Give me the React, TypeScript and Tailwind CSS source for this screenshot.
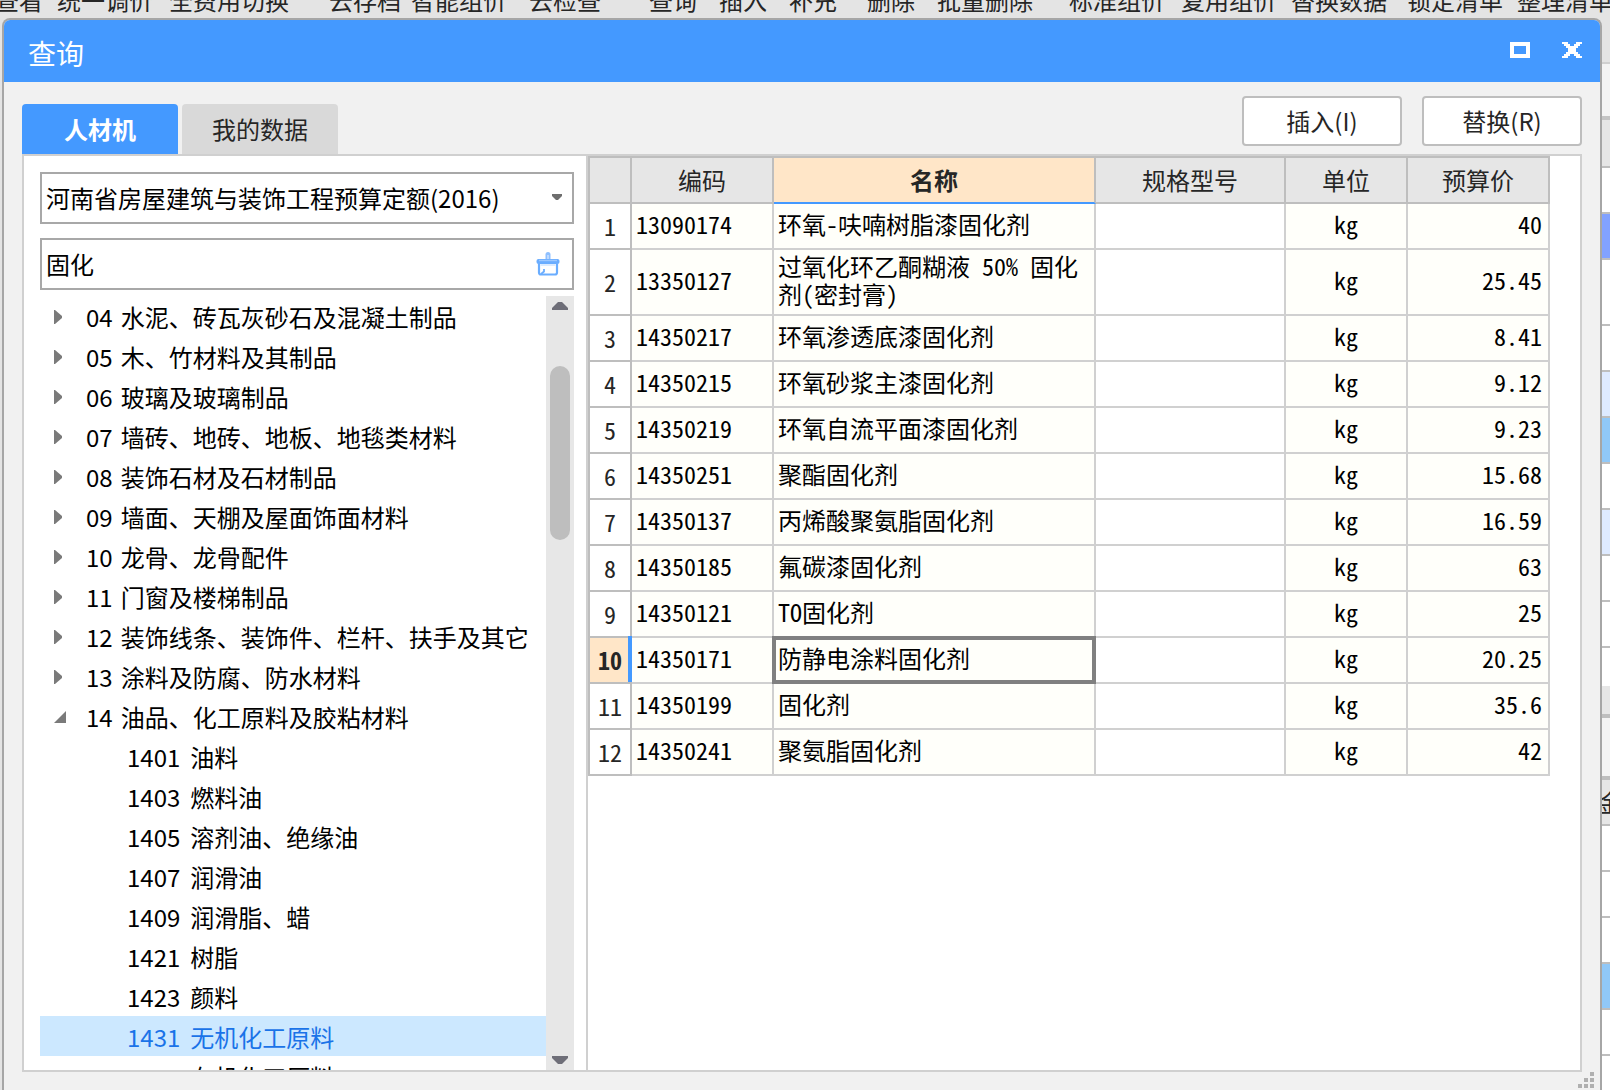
import { useState } from 'react'
import clsx from 'clsx'

// ============================================================================
// DATA
// ============================================================================

const toolbarItems = [
  { label: '查看', gap: '-ml-[5px]' },
  { label: '统一调价', gap: 'ml-3.5' },
  { label: '全费用切换', gap: 'ml-4' },
  { label: '云存档', gap: 'ml-10' },
  { label: '智能组价', gap: 'ml-2.5' },
  { label: '云检查', gap: 'ml-[22px]' },
  { label: '查询', gap: 'ml-12' },
  { label: '插入', gap: 'ml-[22px]' },
  { label: '补充', gap: 'ml-[22px]' },
  { label: '删除', gap: 'ml-[30px]' },
  { label: '批量删除', gap: 'ml-[22px]' },
  { label: '标准组价', gap: 'ml-9' },
  { label: '复用组价', gap: 'ml-4' },
  { label: '替换数据', gap: 'ml-3.5' },
  { label: '锁定清单', gap: 'ml-5' },
  { label: '整理清单', gap: 'ml-3.5' },
]

const categories = [
  { code: '04', name: '水泥、砖瓦灰砂石及混凝土制品' },
  { code: '05', name: '木、竹材料及其制品' },
  { code: '06', name: '玻璃及玻璃制品' },
  { code: '07', name: '墙砖、地砖、地板、地毯类材料' },
  { code: '08', name: '装饰石材及石材制品' },
  { code: '09', name: '墙面、天棚及屋面饰面材料' },
  { code: '10', name: '龙骨、龙骨配件' },
  { code: '11', name: '门窗及楼梯制品' },
  { code: '12', name: '装饰线条、装饰件、栏杆、扶手及其它' },
  { code: '13', name: '涂料及防腐、防水材料' },
  {
    code: '14',
    name: '油品、化工原料及胶粘材料',
    children: [
      { code: '1401', name: '油料' },
      { code: '1403', name: '燃料油' },
      { code: '1405', name: '溶剂油、绝缘油' },
      { code: '1407', name: '润滑油' },
      { code: '1409', name: '润滑脂、蜡' },
      { code: '1421', name: '树脂' },
      { code: '1423', name: '颜料' },
      { code: '1431', name: '无机化工原料' },
      { code: '1433', name: '有机化工原料' },
    ],
  },
]

const materials = [
  { code: '13090174', name: '环氧-呋喃树脂漆固化剂', price: '40' },
  { code: '13350127', name: '过氧化环乙酮糊液 50% 固化剂(密封膏)', price: '25.45' },
  { code: '14350217', name: '环氧渗透底漆固化剂', price: '8.41' },
  { code: '14350215', name: '环氧砂浆主漆固化剂', price: '9.12' },
  { code: '14350219', name: '环氧自流平面漆固化剂', price: '9.23' },
  { code: '14350251', name: '聚酯固化剂', price: '15.68' },
  { code: '14350137', name: '丙烯酸聚氨脂固化剂', price: '16.59' },
  { code: '14350185', name: '氟碳漆固化剂', price: '63' },
  { code: '14350121', name: 'TO固化剂', price: '25' },
  { code: '14350171', name: '防静电涂料固化剂', price: '20.25' },
  { code: '14350199', name: '固化剂', price: '35.6' },
  { code: '14350241', name: '聚氨脂固化剂', price: '42' },
]

// Rows of the main window that stay visible beside the dialog
const backgroundRows = [
  'h-[46px] bg-[#e4e4e4] border-b-2 border-[#d0d0d0]',
  'h-14 bg-[#f4f4f4] border-b-4 border-[#c4c4c4]',
  'h-12 bg-[#e6e6e6] border-b-2 border-[#bebebe]',
  'h-[46px] bg-white border-b-2 border-[#bebebe]',
  'h-[46px] bg-[#82a2ff] border-b-2 border-[#bebebe]',
  'h-[66px] bg-white border-b-2 border-[#bebebe]',
  'h-[46px] bg-white border-b-2 border-[#bebebe]',
  'h-[46px] bg-[#deeaff] border-b-2 border-[#bebebe]',
  'h-[46px] bg-[#90c8f8] border-b-2 border-[#bebebe]',
  'h-[46px] bg-white border-b-2 border-[#bebebe]',
  'h-[46px] bg-[#deeaff] border-b-2 border-[#bebebe]',
  'h-[46px] bg-white border-b-2 border-[#bebebe]',
  'h-[46px] bg-white border-b-2 border-[#bebebe]',
  'h-[38px] bg-white',
  'h-8 bg-[#e6e6e6] border-b-4 border-[#bebebe]',
  'h-[62px] bg-[#f4f4f4] border-b-4 border-[#bebebe]',
]

const backgroundRowsBelow = [
  'h-[46px] bg-white border-b-2 border-[#bebebe]',
  'h-[46px] bg-white border-b-2 border-[#bebebe]',
  'h-[46px] bg-white border-b-2 border-[#bebebe]',
  'h-[46px] bg-[#90c8f8] border-b-2 border-[#bebebe]',
  'h-[46px] bg-white border-b-2 border-[#bebebe]',
]

// ============================================================================
// ICONS
// ============================================================================

function MaximizeIcon() {
  return (
    <svg width="20" height="16" viewBox="0 0 20 16" fill="none" shapeRendering="crispEdges">
      <rect x="2" y="2" width="16" height="12" stroke="#fff" strokeWidth="4" />
    </svg>
  )
}

function CloseIcon() {
  return (
    <svg width="20" height="16" viewBox="0 0 20 16" fill="#fff" shapeRendering="crispEdges">
      <path d="M0 0h6v2h2v2h4V2h2V0h6v2h-2v2h-2v2h-2v4h2v2h2v2h2v2h-6v-2h-2v-2H8v2H6v2H0v-2h2v-2h2v-2h2V6H4V4H2V2H0z" />
    </svg>
  )
}

function BrushIcon() {
  return (
    <svg width="24" height="24" viewBox="0 0 24 24" fill="none">
      <path d="M9.5 8V2.5a2.5 2.5 0 0 1 5 0V8z" fill="#8fc0ff" />
      <path d="M12 3v4" stroke="#d2e6ff" strokeWidth="1.4" />
      <rect x="0.5" y="7" width="23" height="5" rx="2" fill="#6aadff" />
      <path d="M3 8.5h18" stroke="#9cc8ff" strokeWidth="1.4" />
      <path d="M3 12v8.500a2 2 0 0 0 2 2h14a2 2 0 0 0 2-2V12" stroke="#6aadff" strokeWidth="2.200" />
      <path d="M4.500 13h15" stroke="#d2e6ff" strokeWidth="1.600" />
      <path d="M8 17v2.500L5 22" stroke="#6aadff" strokeWidth="1.800" />
    </svg>
  )
}

function CollapsedIcon() {
  return (
    <svg className="block" width="8" height="14" viewBox="0 0 8 14" fill="#7a7a7a">
      <path d="M0 0h1l7 6v2l-7 6H0z" />
    </svg>
  )
}

function ExpandedIcon() {
  return (
    <svg className="block" width="12" height="12" viewBox="0 0 12 12" fill="#7a7a7a">
      <path d="M12 0v12H0z" />
    </svg>
  )
}

function ResizeGrip() {
  return (
    <svg width="16" height="16" viewBox="0 0 16 16" fill="#b0b0b0">
      <path d="M12 0h4v4h-4zM6 6h4v4H6zM12 6h4v4h-4zM0 12h4v4H0zM6 12h4v4H6zM12 12h4v4h-4z" />
    </svg>
  )
}

// ============================================================================
// TREE
// ============================================================================

interface TreeRowProps {
  code: string
  name: string
  level: number
  expanded?: boolean
  selected?: boolean
  onClick: () => void
}

function TreeRow({ code, name, level, expanded, selected, onClick }: TreeRowProps) {
  return (
    <button
      type="button"
      onClick={onClick}
      className={clsx(
        'flex h-10 w-full items-center pt-0.5 text-left whitespace-nowrap',
        level === 0 ? 'pl-3.5' : 'pl-[87px]',
        selected ? 'bg-[#cce8ff] text-[#1a73e8]' : 'text-black'
      )}
    >
      {level === 0 && (
        <span className="w-8">{expanded ? <ExpandedIcon /> : <CollapsedIcon />}</span>
      )}
      <span className={level === 0 ? 'mr-2' : 'mr-2.5'}>{code}</span>
      <span>{name}</span>
    </button>
  )
}

function CategoryTree() {
  const [selected, setSelected] = useState('1431')

  return (
    <div className="mt-1.5 flex min-h-0 flex-1">
      <ul className="min-w-0 flex-1 overflow-hidden">
        {categories.map((item) => (
          <li key={item.code}>
            <TreeRow
              code={item.code}
              name={item.name}
              level={0}
              expanded={!!item.children}
              selected={selected === item.code}
              onClick={() => setSelected(item.code)}
            />
            {item.children && (
              <ul>
                {item.children.map((child) => (
                  <li key={child.code}>
                    <TreeRow
                      code={child.code}
                      name={child.name}
                      level={1}
                      selected={selected === child.code}
                      onClick={() => setSelected(child.code)}
                    />
                  </li>
                ))}
              </ul>
            )}
          </li>
        ))}
      </ul>

      {/* Scrollbar */}
      <div className="flex w-7 flex-col items-center bg-[#e7e7e7] py-1.5">
        <svg width="16" height="8" viewBox="0 0 16 8" fill="#6e6e78">
          <path d="M6 0h4l6 6v2H0V6z" />
        </svg>
        <div className="mt-14 h-[174px] w-5 rounded-full bg-[#bebebe]" />
        <svg className="mt-auto" width="16" height="8" viewBox="0 0 16 8" fill="#6e6e78">
          <path d="M0 0h16v2l-6 6H6L0 2z" />
        </svg>
      </div>
    </div>
  )
}

// ============================================================================
// TABLE
// ============================================================================

const head = 'h-[46px] border-r-2 border-b-2 border-[#bebebe] bg-[#e6e6e6] font-normal'
const cell = 'border-r-2 border-b-2 border-[#d0d0d0] pt-0.5 pb-1.5'

function MaterialTable() {
  const [active, setActive] = useState(9)

  return (
    <table className="w-full table-fixed border-separate border-spacing-0 border-t-2 border-l-2 border-[#bebebe] font-['Noto_Sans_Mono_CJK_SC','Noto_Sans_CJK_SC',monospace] leading-7">
      <colgroup>
        <col className="w-[42px]" />
        <col className="w-[142px]" />
        <col className="w-[322px]" />
        <col />
        <col className="w-[122px]" />
        <col className="w-[142px]" />
      </colgroup>
      <thead>
        <tr className="text-[#262626]">
          <th className={head} />
          <th className={head}>编码</th>
          <th className="h-[46px] border-r-2 border-b-2 border-r-[#bebebe] border-b-[#4499ff] bg-[#ffe6c8] font-bold">
            名称
          </th>
          <th className={head}>规格型号</th>
          <th className={head}>单位</th>
          <th className={head}>预算价</th>
        </tr>
      </thead>
      <tbody className="text-black">
        {materials.map((row, i) => (
          <tr key={row.code} className="h-[46px]" onClick={() => setActive(i)}>
            <th
              scope="row"
              className={clsx(
                'relative border-r-2 border-b-2 border-[#bebebe] text-[#262626]',
                i === active ? 'bg-[#ffe6c8] font-bold' : 'bg-white font-normal'
              )}
            >
              {i + 1}
              {i === active && (
                <span className="absolute -top-0.5 -right-0.5 bottom-0 w-1 bg-[#4499ff]" />
              )}
            </th>
            <td className={clsx(cell, 'bg-[#fffffa] pl-1')}>{row.code}</td>
            <td className={clsx(cell, 'relative bg-[#fffffa] pl-1')}>
              {row.name}
              {i === active && (
                <span className="absolute -inset-0.5 border-4 border-[#808080]" />
              )}
            </td>
            <td className={clsx(cell, 'bg-white')} />
            <td className={clsx(cell, 'bg-[#fffffa] text-center')}>kg</td>
            <td className={clsx(cell, 'bg-[#fffffa] pr-1.5 text-right')}>{row.price}</td>
          </tr>
        ))}
      </tbody>
    </table>
  )
}

// ============================================================================
// QUERY DIALOG
// ============================================================================

function QueryDialog() {
  const [tab, setTab] = useState(0)

  return (
    <section className="flex min-w-0 flex-1 flex-col overflow-hidden rounded-t-lg border-2 border-b-0 border-[#a6a6a6] bg-[#f1f1f1]">
      {/* Title bar */}
      <header className="flex h-[62px] shrink-0 items-center justify-between bg-[#4499ff] pt-1 pr-[18px] pl-6 text-white">
        <h1 className="text-[28px] leading-8">查询</h1>
        <div className="flex gap-8 pb-1.5">
          <button type="button" aria-label="最大化">
            <MaximizeIcon />
          </button>
          <button type="button" aria-label="关闭">
            <CloseIcon />
          </button>
        </div>
      </header>

      {/* Tabs and actions */}
      <div className="flex h-[72px] shrink-0 items-end justify-between px-[18px]">
        <div className="flex gap-1">
          {['人材机', '我的数据'].map((label, i) => (
            <button
              key={label}
              type="button"
              onClick={() => setTab(i)}
              className={clsx(
                'h-[50px] w-[156px] rounded-t-sm',
                tab === i ? 'bg-[#4499ff] font-bold text-white' : 'bg-[#d9d9d9] text-[#262626]'
              )}
            >
              {label}
            </button>
          ))}
        </div>
        <div className="flex gap-5 pb-2 text-[#262626]">
          <button type="button" className="h-[50px] w-40 rounded border-2 border-[#bebebe] bg-white">
            插入(I)
          </button>
          <button type="button" className="h-[50px] w-40 rounded border-2 border-[#bebebe] bg-white">
            替换(R)
          </button>
        </div>
      </div>

      {/* Panel */}
      <div className="mx-[18px] flex min-h-0 flex-1 border-2 border-[#d0d0d0] bg-white">
        <div className="flex w-[564px] shrink-0 flex-col border-r-2 border-[#d0d0d0] pt-4 pr-3 pl-4">
          <div className="relative">
            <select
              aria-label="定额库"
              className="block h-[52px] w-full appearance-none border-2 border-[#a8a8a8] bg-white pl-1 text-black"
            >
              <option>河南省房屋建筑与装饰工程预算定额(2016)</option>
            </select>
            <svg
              className="pointer-events-none absolute top-[22px] right-3"
              width="10"
              height="6"
              viewBox="0 0 10 6"
              fill="#6e6e6e"
            >
              <path d="M0 0h10v2L6 6H4L0 2z" />
            </svg>
          </div>
          <div className="mt-3.5 flex h-[52px] items-center border-2 border-[#a8a8a8] bg-white pr-3 pl-1">
            <input
              aria-label="关键字"
              defaultValue="固化"
              className="min-w-0 flex-1 text-black outline-none"
            />
            <button type="button" aria-label="清空">
              <BrushIcon />
            </button>
          </div>
          <CategoryTree />
        </div>

        <div className="min-w-0 flex-1 pr-[30px]">
          <MaterialTable />
        </div>
      </div>

      <footer className="flex h-[18px] shrink-0 justify-end pr-1.5">
        <ResizeGrip />
      </footer>
    </section>
  )
}

// ============================================================================
// APP
// ============================================================================

export default function App() {
  return (
    <div className="flex h-screen flex-col overflow-hidden bg-[#e4e4e4] font-['Noto_Sans_CJK_SC',sans-serif] text-[24px]">
      <nav className="flex h-[18px] shrink-0 items-end overflow-hidden leading-9 whitespace-nowrap text-[#262626]">
        {toolbarItems.map((item) => (
          <span key={item.label} className={clsx('shrink-0', item.gap)}>
            {item.label}
          </span>
        ))}
      </nav>
      <main className="flex min-h-0 flex-1 pl-0.5">
        <QueryDialog />
        <div className="w-2 shrink-0 overflow-hidden">
          {backgroundRows.map((row, i) => (
            <div key={i} className={row} />
          ))}
          <div className="flex h-[46px] items-center overflow-hidden border-b-2 border-[#bebebe] bg-[#e6e6e6]">
            <span className="-ml-1 text-[#262626]">金</span>
          </div>
          {backgroundRowsBelow.map((row, i) => (
            <div key={i} className={row} />
          ))}
          <div className="h-9 bg-white" />
        </div>
      </main>
    </div>
  )
}
